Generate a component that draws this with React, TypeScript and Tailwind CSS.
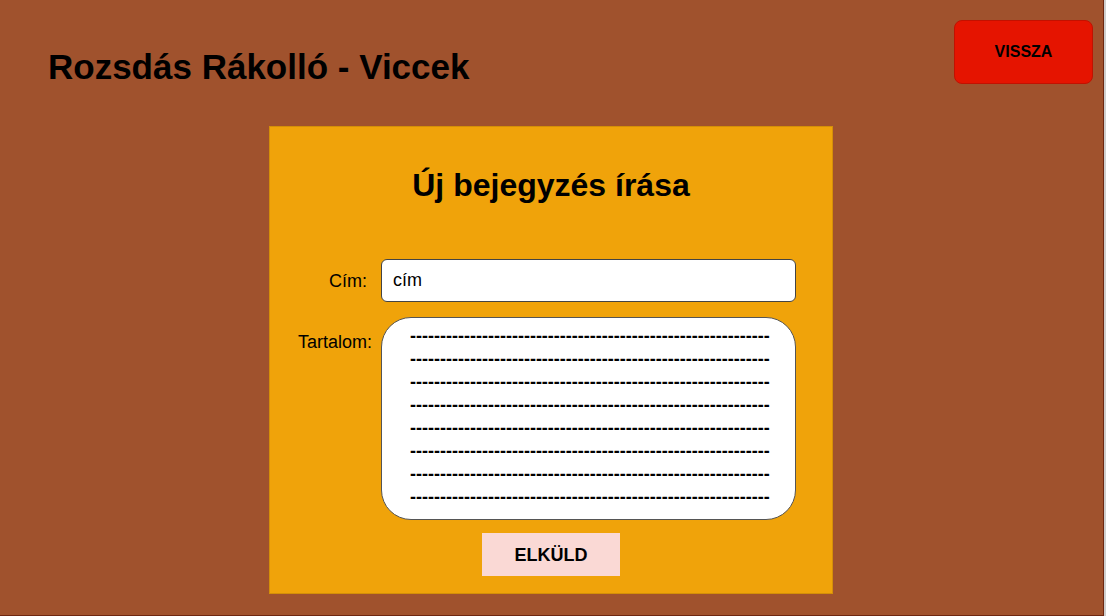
import { useState } from "react";

const dashLine = "-".repeat(60);
const defaultContent = Array.from({ length: 8 }, () => dashLine).join("\n");

export default function App() {
  const [title, setTitle] = useState("cím");
  const [content, setContent] = useState(defaultContent);

  return (
    <div className="flex w-[1106px] h-[616px] overflow-hidden font-['Liberation_Sans',Arial,sans-serif] text-black">
      <div className="w-[1104px] h-[616px] bg-[#a0522d] border-r border-b border-[#6e2710] flex flex-col">
        {/* Header */}
        <div className="flex items-start justify-between pl-12 pr-[10px]">
          <h1 className="mt-[47px] text-[35px] font-bold leading-[40px]">Rozsdás Rákolló - Viccek</h1>
          <button className="mt-5 w-[139px] h-16 rounded-lg bg-[#e51400] border border-[#c21100] text-base font-bold">
            VISSZA
          </button>
        </div>

        {/* Form card */}
        <div className="ml-[269px] mt-[39px] w-[564px] bg-[#f0a30a] border border-[#d48f08] pt-10 pb-[17px] flex flex-col">
          <h2 className="text-[32px] font-bold leading-[37px] text-center">Új bejegyzés írása</h2>

          <div className="mt-[55px] flex items-center">
            <label className="w-[100px] pr-[3px] text-right text-lg">Cím:</label>
            <input
              value={title}
              onChange={(e) => setTitle(e.target.value)}
              className="ml-[11px] w-[415px] h-[43px] rounded-md border border-[#444] bg-white px-[11px] text-lg outline-none"
            />
          </div>

          <div className="mt-[15px] flex items-start">
            <label className="w-[102px] pt-[11px] text-right text-lg">Tartalom:</label>
            <textarea
              value={content}
              onChange={(e) => setContent(e.target.value)}
              wrap="off"
              className="ml-[9px] w-[415px] h-[203px] rounded-[30px] border border-[#555] bg-white pl-[28px] pr-[14px] pt-[7px] text-lg font-bold leading-[23px] resize-none overflow-hidden outline-none"
            />
          </div>

          <button className="mx-auto mt-[13px] w-[138px] h-[43px] bg-[#fad9d5] text-lg font-bold">
            ELKÜLD
          </button>
        </div>
      </div>
      <div className="w-[2px] h-[616px] bg-[#cfcfcf]" />
    </div>
  );
}
